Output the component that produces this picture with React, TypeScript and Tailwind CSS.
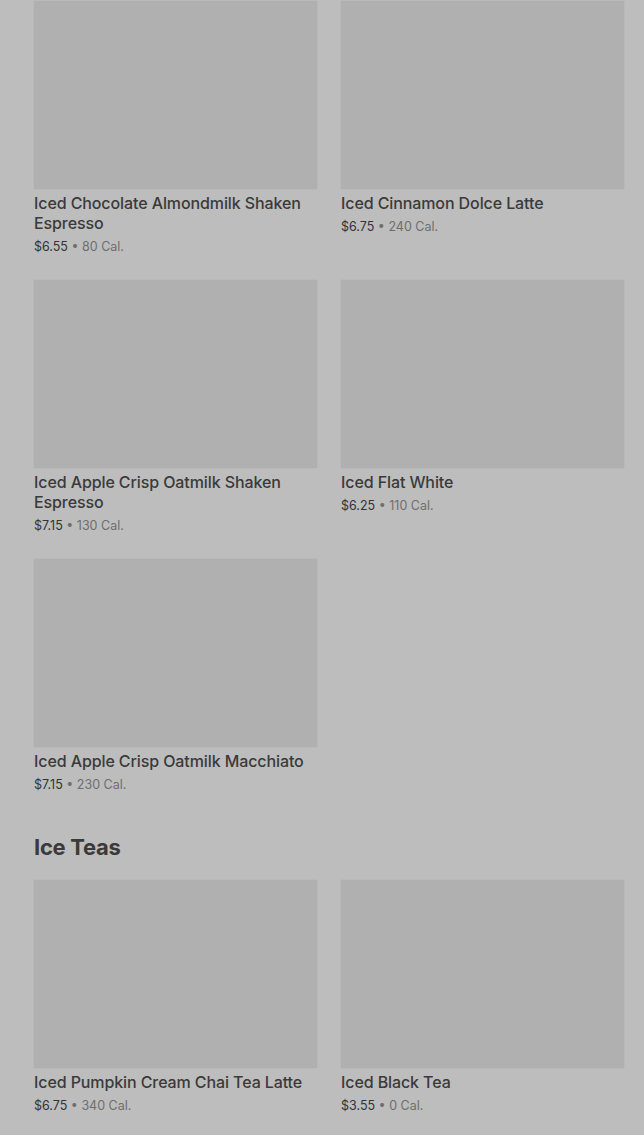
import React from "react";

type Item = { name: string; price: string; cal: string };

const coffee: Item[] = [
  { name: "Iced Chocolate Almondmilk Shaken Espresso", price: "$6.55", cal: "80 Cal." },
  { name: "Iced Cinnamon Dolce Latte", price: "$6.75", cal: "240 Cal." },
  { name: "Iced Apple Crisp Oatmilk Shaken Espresso", price: "$7.15", cal: "130 Cal." },
  { name: "Iced Flat White", price: "$6.25", cal: "110 Cal." },
  { name: "Iced Apple Crisp Oatmilk Macchiato", price: "$7.15", cal: "230 Cal." },
];

const teas: Item[] = [
  { name: "Iced Pumpkin Cream Chai Tea Latte", price: "$6.75", cal: "340 Cal." },
  { name: "Iced Black Tea", price: "$3.55", cal: "0 Cal." },
];

function Card({ item }: { item: Item }) {
  return (
    <div className="flex flex-col">
      <div className="h-[188px] w-full bg-[#b0b0b0] shadow-[0_0_1px_rgba(0,0,0,0.12)]" />
      <div className="mt-[4px] text-[16px] leading-[20px] font-medium tracking-[-0.1px] text-[#3a3a3a]">{item.name}</div>
      <div className="mt-[4px] text-[12.5px] leading-[20px]">
        <span className="text-[#333333]">{item.price}</span>
        <span className="text-[#6e6e6e]"> • {item.cal}</span>
      </div>
    </div>
  );
}

export default function App() {
  return (
    <div
      className="min-h-[1135px] w-full bg-[#bdbdbd] pl-[34px] pr-[20px] pt-[1px]"
      style={{ fontFamily: "Inter, 'Noto Sans', sans-serif" }}
    >
      <div className="grid grid-cols-2 gap-x-[24px] gap-y-[23px]">
        {coffee.map((it) => (
          <Card key={it.name} item={it} />
        ))}
      </div>
      <h2 className="mt-[38px] mb-[19px] text-[22px] leading-[28px] font-bold text-[#3a3a3a] tracking-[-0.3px]">
        Ice Teas
      </h2>
      <div className="grid grid-cols-2 gap-x-[24px] gap-y-[23px]">
        {teas.map((it) => (
          <Card key={it.name} item={it} />
        ))}
      </div>
    </div>
  );
}
